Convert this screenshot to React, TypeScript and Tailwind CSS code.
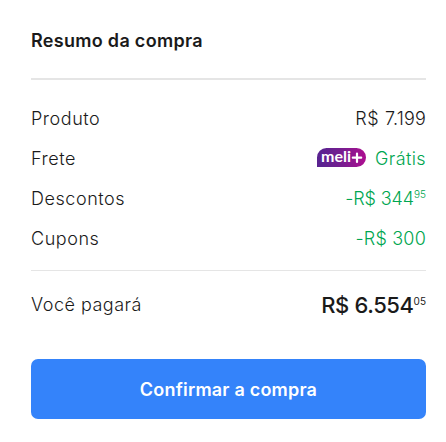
import React from "react";

const MeliPlus: React.FC = () => (
  <svg
    width="49"
    height="19"
    viewBox="0 0 49 19"
    role="img"
    aria-label="meli+"
    className="mb-1 overflow-visible"
  >
    <defs>
      <linearGradient id="meli" x1="0" x2="1" y1="0" y2="0">
        <stop offset="0.1" stopColor="#5a2390" />
        <stop offset="0.55" stopColor="#7b1c90" />
        <stop offset="0.95" stopColor="#a90f90" />
      </linearGradient>
    </defs>
    <path
      d="M9.5 0H39.5a9.5 9.5 0 0 1 0 19H0V9.5A9.5 9.5 0 0 1 9.5 0Z"
      fill="url(#meli)"
    />
    <text
      x="4"
      y="14"
      fill="#fff"
      textLength="30"
      lengthAdjust="spacingAndGlyphs"
      className="font-['Lato',sans-serif] text-[15px] font-bold tracking-normal"
    >
      meli
    </text>
    <path
      d="M40 5.5v8.4M35.8 9.7h8.4"
      stroke="#fff"
      strokeWidth="2.2"
      strokeLinecap="round"
    />
  </svg>
);

interface RowProps {
  label: string;
  children: React.ReactNode;
}

const Row: React.FC<RowProps> = ({ label, children }) => (
  <div className="flex h-10 items-center justify-between">
    <span className="tracking-[0.55px]">{label}</span>
    {children}
  </div>
);

const App: React.FC = () => {
  return (
    <main className="h-[442px] w-[446px] bg-white pl-[31px] pr-5 pt-[27px] font-['Inter',sans-serif] text-lg font-light whitespace-nowrap text-[#1a1a1a]">
      <h1 className="h-[51px] font-semibold leading-7 tracking-[0.3px]">
        Resumo da compra
      </h1>

      <section className="border-t-2 border-[#e5e5e5] pt-[19px] pb-[11px]">
        <Row label="Produto">
          <span className="tracking-[0.6px]">
            R$ <span className="tracking-[0.2px]">7.199</span>
          </span>
        </Row>
        <Row label="Frete">
          <span className="flex items-center gap-[9px] tracking-[0.4px] text-[#00a650]">
            <MeliPlus />
            Grátis
          </span>
        </Row>
        <Row label="Descontos">
          <span className="flex text-[#00a650]">
            <span className="tracking-[-0.1px]">-R$ 344</span>
            <span className="text-[10px] leading-[18px]">95</span>
          </span>
        </Row>
        <Row label="Cupons">
          <span className="tracking-[0.2px] text-[#00a650]">-R$ 300</span>
        </Row>
      </section>

      <section className="flex h-[89px] justify-between border-t border-[#e5e5e5] pt-5">
        <span className="leading-7 tracking-[0.5px]">Você pagará</span>
        <span className="flex">
          <span className="text-[22px] font-medium leading-[29px] tracking-[-0.4px]">
            R$ 6.554
          </span>
          <span className="text-[10px] font-normal leading-[20px]">05</span>
        </span>
      </section>

      <button className="h-[60px] w-full rounded-[7px] bg-[#3483fa] pt-0.5 text-lg font-semibold tracking-[0.2px] text-white">
        Confirmar a compra
      </button>
    </main>
  );
};

export default App;
